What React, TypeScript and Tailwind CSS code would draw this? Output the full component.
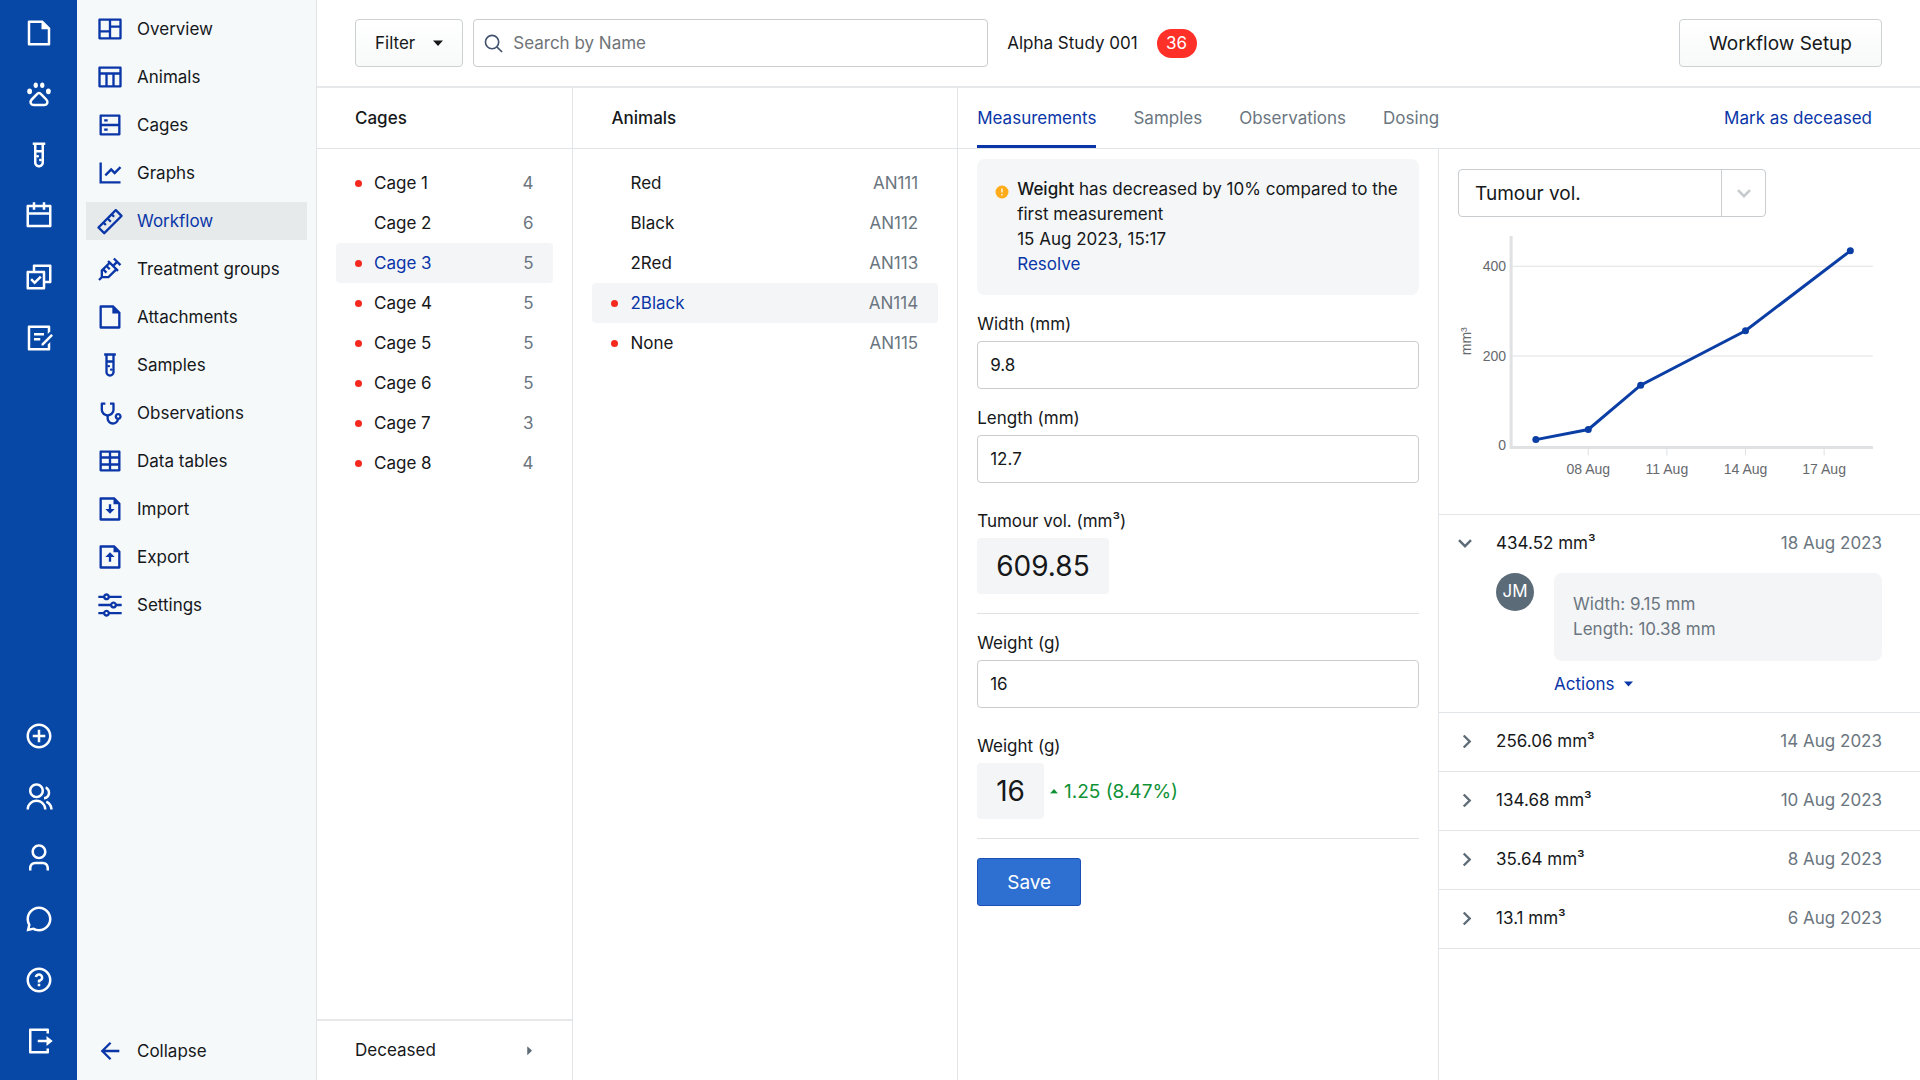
import { useState, type ReactNode } from "react"
import {
    RiAddCircleLine,
    RiArrowLeftLine,
    RiCalendarLine,
    RiChat3Line,
    RiCheckboxMultipleLine,
    RiDraftLine,
    RiEqualizerLine,
    RiFileDownloadLine,
    RiFileUploadLine,
    RiGroupLine,
    RiLayoutMasonryLine,
    RiLineChartLine,
    RiLogoutBoxRLine,
    RiQuestionLine,
    RiRulerLine,
    RiServerLine,
    RiStethoscopeLine,
    RiSyringeLine,
    RiTable2,
    RiTableLine,
    RiTestTubeLine,
    RiUser3Line,
} from "react-icons/ri"
import clsx from "clsx"

interface IconProps {
    className?: string
}

interface NavItem {
    label: string
    icon: (props: IconProps) => ReactNode
}

interface Entry {
    volume: string
    date: string
    width: string
    length: string
}

const FileIcon = ({ className }: IconProps) => (
    <svg viewBox="0 0 24 24" fill="currentColor" className={className} aria-hidden="true">
        <path fillRule="evenodd" d="M4 2h11l6 6v13a1 1 0 0 1-1 1H4a1 1 0 0 1-1-1V3a1 1 0 0 1 1-1Zm1 2v16h14V9h-5V4H5Z" />
    </svg>
)

const PawIcon = ({ className }: IconProps) => (
    <svg viewBox="0 0 24 24" fill="currentColor" className={className} aria-hidden="true">
        <ellipse cx="4.500" cy="9.800" rx="1.900" ry="2.300" />
        <ellipse cx="9.400" cy="5" rx="1.700" ry="2.200" />
        <ellipse cx="14.600" cy="5" rx="1.700" ry="2.200" />
        <ellipse cx="19.500" cy="9.800" rx="1.900" ry="2.300" />
        <path
            d="M12 11.200c.8 0 1.300.5 2 1.300l3.800 3.900c1.900 1.900.8 4.300-1.400 4.300H7.600c-2.200 0-3.300-2.400-1.400-4.300L10 12.500c.7-.8 1.200-1.300 2-1.300Z"
            fill="none"
            stroke="currentColor"
            strokeWidth="2"
        />
    </svg>
)

const SearchIcon = ({ className }: IconProps) => (
    <svg viewBox="0 0 20 20" fill="none" stroke="currentColor" strokeWidth="1.7" className={className} aria-hidden="true">
        <circle cx="8.500" cy="8.500" r="7" />
        <path d="m13.500 13.500 5.500 5.500" />
    </svg>
)

const Caret = ({ className }: IconProps) => (
    <svg viewBox="0 0 10 6" fill="currentColor" className={className} aria-hidden="true">
        <path d="M0 .5h10L5 6z" />
    </svg>
)

const Chevron = ({ className }: IconProps) => (
    <svg viewBox="0 0 14 9" fill="none" stroke="currentColor" strokeWidth="2.400" className={className} aria-hidden="true">
        <path d="m1 1.200 6 6 6-6" />
    </svg>
)

const railTop: NavItem[] = [
    { label: "Studies", icon: FileIcon },
    { label: "Animals", icon: PawIcon },
    { label: "Samples", icon: RiTestTubeLine },
    { label: "Calendar", icon: RiCalendarLine },
    { label: "Tasks", icon: RiCheckboxMultipleLine },
    { label: "Notes", icon: RiDraftLine },
]

const railBottom: NavItem[] = [
    { label: "Add", icon: RiAddCircleLine },
    { label: "Team", icon: RiGroupLine },
    { label: "Account", icon: RiUser3Line },
    { label: "Chat", icon: RiChat3Line },
    { label: "Help", icon: RiQuestionLine },
    { label: "Log out", icon: RiLogoutBoxRLine },
]

const studyNav: NavItem[] = [
    { label: "Overview", icon: RiLayoutMasonryLine },
    { label: "Animals", icon: RiTableLine },
    { label: "Cages", icon: RiServerLine },
    { label: "Graphs", icon: RiLineChartLine },
    { label: "Workflow", icon: RiRulerLine },
    { label: "Treatment groups", icon: RiSyringeLine },
    { label: "Attachments", icon: FileIcon },
    { label: "Samples", icon: RiTestTubeLine },
    { label: "Observations", icon: RiStethoscopeLine },
    { label: "Data tables", icon: RiTable2 },
    { label: "Import", icon: RiFileDownloadLine },
    { label: "Export", icon: RiFileUploadLine },
    { label: "Settings", icon: RiEqualizerLine },
]

const cages = [
    { name: "Cage 1", meta: "4", alert: true },
    { name: "Cage 2", meta: "6", alert: false },
    { name: "Cage 3", meta: "5", alert: true },
    { name: "Cage 4", meta: "5", alert: true },
    { name: "Cage 5", meta: "5", alert: true },
    { name: "Cage 6", meta: "5", alert: true },
    { name: "Cage 7", meta: "3", alert: true },
    { name: "Cage 8", meta: "4", alert: true },
]

const animals = [
    { name: "Red", meta: "AN111", alert: false },
    { name: "Black", meta: "AN112", alert: false },
    { name: "2Red", meta: "AN113", alert: false },
    { name: "2Black", meta: "AN114", alert: true },
    { name: "None", meta: "AN115", alert: true },
]

const tabs = ["Measurements", "Samples", "Observations", "Dosing"]

const entries: Entry[] = [
    { volume: "434.52", date: "18 Aug 2023", width: "9.15", length: "10.38" },
    { volume: "256.06", date: "14 Aug 2023", width: "7.9", length: "8.21" },
    { volume: "134.68", date: "10 Aug 2023", width: "6.2", length: "7.01" },
    { volume: "35.64", date: "8 Aug 2023", width: "3.8", length: "4.94" },
    { volume: "13.1", date: "6 Aug 2023", width: "2.7", length: "3.59" },
]

function Rail() {
    const renderItem = ({ label, icon: Icon }: NavItem) => (
        <a key={label} href="#" aria-label={label} className="flex h-[61px] items-center justify-center text-white">
            <Icon className="size-[30px]" />
        </a>
    )
    return (
        <nav aria-label="Main" className="flex w-[77px] shrink-0 flex-col justify-between bg-[#0747a6] pt-0.5 pb-[9px]">
            <div>{railTop.map(renderItem)}</div>
            <div>{railBottom.map(renderItem)}</div>
        </nav>
    )
}

function StudyNav() {
    return (
        <nav
            aria-label="Study"
            className="flex w-[240px] shrink-0 flex-col justify-between border-r border-[#e2e5e8] bg-[#f5f9fa] px-[9px] py-2.5"
        >
            <div className="flex flex-col gap-2.5">
                {studyNav.map(({ label, icon: Icon }) => (
                    <a
                        key={label}
                        href="#"
                        className={clsx(
                            "flex h-[38px] items-center gap-[13px] pl-2.5",
                            label === "Workflow" && "bg-[#e7eaeb] text-[#0a36a8]"
                        )}
                    >
                        <Icon className="size-7 text-[#0a36a8]" />
                        {label}
                    </a>
                ))}
            </div>
            <button type="button" className="flex h-[38px] items-center gap-[13px] pl-2.5">
                <RiArrowLeftLine className="size-7 text-[#0a36a8]" />
                Collapse
            </button>
        </nav>
    )
}

function TopBar() {
    return (
        <header className="flex h-[88px] items-center border-b-2 border-[#e6e8ea] px-[38px]">
            <button
                type="button"
                className="flex h-12 items-center gap-[18px] rounded border border-[#cdd1d4] bg-linear-to-b from-white to-[#f8f9f9] px-[19px]"
            >
                Filter
                <Caret className="w-2.5" />
            </button>
            <div className="ml-2.5 flex h-12 max-w-[515px] flex-1 items-center gap-2.5 rounded border border-[#c9cdd0] pl-2.5">
                <SearchIcon className="size-[19px] text-[#42526e]" />
                <input
                    type="search"
                    aria-label="Search by Name"
                    placeholder="Search by Name"
                    className="min-w-0 flex-1 outline-none placeholder:text-[#6f7478]"
                />
            </div>
            <span className="ml-[19px]">Alpha Study 001</span>
            <span className="ml-[19px] flex h-[29px] w-10 items-center justify-center rounded-full bg-[#ff3028] text-white">36</span>
            <button
                type="button"
                className="ml-auto h-12 rounded border border-[#cdd1d4] bg-linear-to-b from-white to-[#f8f9f9] px-[29px] text-[19px]"
            >
                Workflow Setup
            </button>
        </header>
    )
}

interface PickListProps {
    items: { name: string; meta: string; alert: boolean }[]
    selected: string
    onSelect: (name: string) => void
}

function PickList({ items, selected, onSelect }: PickListProps) {
    return (
        <ul className="flex-1 px-[19px] pt-3.5">
            {items.map((item) => (
                <li key={item.name}>
                    <button
                        type="button"
                        onClick={() => onSelect(item.name)}
                        aria-pressed={item.name === selected}
                        className={clsx(
                            "flex h-10 w-full items-center gap-3 rounded pr-5 pl-[19px]",
                            item.name === selected && "bg-[#f4f5f7] text-[#0a36a8]"
                        )}
                    >
                        <span className={clsx("size-[7px] rounded-full", item.alert && "bg-[#f5291f]")} />
                        {item.name}
                        <span className="ml-auto text-[#6b7680]">{item.meta}</span>
                    </button>
                </li>
            ))}
        </ul>
    )
}

interface FieldProps {
    id: string
    label: string
    initial: string
}

function Field({ id, label, initial }: FieldProps) {
    const [value, setValue] = useState(initial)
    return (
        <div className="mt-[17px]">
            <label htmlFor={id} className="block">
                {label}
            </label>
            <input
                id={id}
                value={value}
                onChange={(e) => setValue(e.target.value)}
                className="mt-1 block h-12 w-full rounded border border-[#c9cdd0] px-3"
            />
        </div>
    )
}

function MeasurementForm() {
    return (
        <form onSubmit={(e) => e.preventDefault()} className="border-r border-[#e2e5e8] px-[19px] pt-2.5">
            <div className="flex gap-2 rounded-lg bg-[#f4f6f7] py-[18px] pr-4 pl-[18px]">
                <svg viewBox="0 0 14 14" className="mt-2 size-3.5 shrink-0" aria-hidden="true">
                    <circle cx="7" cy="7" r="6.500" fill="#ffab1a" />
                    <path d="M7 3.500v4M7 9v1.500" stroke="#fff" strokeWidth="1.300" />
                </svg>
                <div>
                    <p>
                        <span className="font-medium">Weight</span> has decreased by 10% compared to the first measurement
                    </p>
                    <p>15 Aug 2023, 15:17</p>
                    <a href="#" className="block text-[#0a36a8]">
                        Resolve
                    </a>
                </div>
            </div>

            <Field id="width" label="Width (mm)" initial="9.8" />
            <Field id="length" label="Length (mm)" initial="12.7" />
            <div className="mt-[26px] border-b border-[#dfe2e4] pb-[19px]">
                <p>Tumour vol. (mm³)</p>
                <output className="mt-1 inline-flex h-14 items-center rounded bg-[#f4f5f7] px-[19px] text-[28px]">609.85</output>
            </div>

            <Field id="weight" label="Weight (g)" initial="16" />
            <div className="mt-[26px] border-b border-[#dfe2e4] pb-[19px]">
                <p>Weight (g)</p>
                <div className="mt-1 flex items-center gap-1.5">
                    <output className="flex h-14 items-center rounded bg-[#f4f5f7] px-[19px] text-[28px]">16</output>
                    <span className="flex items-center gap-1.5 text-[19px] text-[#0f9236]">
                        <Caret className="w-2 rotate-180" />
                        1.25 (8.47%)
                    </span>
                </div>
            </div>
            <button
                type="submit"
                className="mt-[19px] h-12 rounded-[3px] border border-[#1c50b4] bg-[#2d70d1] px-[29px] text-[19px] text-white"
            >
                Save
            </button>
        </form>
    )
}

const chartPoints = [
    { day: 6, vol: 13.1 },
    { day: 8, vol: 35.64 },
    { day: 10, vol: 134.68 },
    { day: 14, vol: 256.06 },
    { day: 18, vol: 434.52 },
]

const dayX = (day: number) => 130 + (day - 8) * 26.15
const volY = (vol: number) => 228 - vol * 0.447

function VolumeChart() {
    return (
        <svg
            viewBox="0 0 423 282"
            className="w-full font-['Liberation_Sans',sans-serif] text-[14px]"
            role="img"
            aria-label="Tumour volume over time"
        >
            <g stroke="#dfe1e3" strokeWidth="1">
                {[200, 400].map((v) => (
                    <line key={v} x1="54" x2="414" y1={volY(v)} y2={volY(v)} />
                ))}
                {[8, 11, 14, 17].map((d) => (
                    <line key={d} x1={dayX(d)} x2={dayX(d)} y1="231" y2="238" />
                ))}
            </g>
            <path d="M53 19v211h361" fill="none" stroke="#dfe1e3" strokeWidth="3" />
            <g fill="#66696d">
                {[0, 200, 400].map((v) => (
                    <text key={v} x="48" y={volY(v) + 5} textAnchor="end">
                        {v}
                    </text>
                ))}
                {[8, 11, 14, 17].map((d) => (
                    <text key={d} x={dayX(d)} y="256" textAnchor="middle">
                        {`${String(d).padStart(2, "0")} Aug`}
                    </text>
                ))}
                <text transform="translate(13 124) rotate(-90)" textAnchor="middle">
                    mm³
                </text>
            </g>
            <polyline
                points={chartPoints.map((p) => `${dayX(p.day)},${volY(p.vol)}`).join(" ")}
                fill="none"
                stroke="#0b3ea5"
                strokeWidth="3"
            />
            {chartPoints.map((p) => (
                <circle key={p.day} cx={dayX(p.day)} cy={volY(p.vol)} r="3.500" fill="#0b3ea5" />
            ))}
        </svg>
    )
}

function History() {
    const [open, setOpen] = useState("434.52")
    return (
        <ul className="border-t border-[#e2e5e8]">
            {entries.map((entry) => {
                const isOpen = entry.volume === open
                return (
                    <li key={entry.volume} className="border-b border-[#e2e5e8] pr-[38px] pl-[19px]">
                        <button
                            type="button"
                            aria-expanded={isOpen}
                            onClick={() => setOpen(isOpen ? "" : entry.volume)}
                            className="flex h-[58px] w-full items-center"
                        >
                            <span className="flex w-[38px] shrink-0">
                                <Chevron className={clsx("w-3.5 text-[#5e6c78]", isOpen ? "" : "ml-0.5 -rotate-90")} />
                            </span>
                            {entry.volume} mm³
                            <span className="ml-auto text-[#6b7680]">{entry.date}</span>
                        </button>
                        {isOpen && (
                            <div className="flex items-start gap-5 pb-[15px] pl-[38px]">
                                <span className="flex size-[38px] items-center justify-center rounded-full bg-[#5c6b78] text-white">
                                    JM
                                </span>
                                <div className="flex-1">
                                    <div className="rounded-lg bg-[#f4f5f7] px-[19px] py-[19px] text-[#6b7680]">
                                        <p>Width: {entry.width} mm</p>
                                        <p>Length: {entry.length} mm</p>
                                    </div>
                                    <button type="button" className="mt-[11px] flex items-center gap-2.5 text-[#0a36a8]">
                                        Actions
                                        <Caret className="w-[9px]" />
                                    </button>
                                </div>
                            </div>
                        )}
                    </li>
                )
            })}
        </ul>
    )
}

export default function App() {
    const [cage, setCage] = useState("Cage 3")
    const [animal, setAnimal] = useState("2Black")
    const [tab, setTab] = useState("Measurements")

    return (
        <div className="flex min-h-screen bg-white font-[Inter,sans-serif] text-[17px] leading-[25px] text-[#16181a]">
            <Rail />
            <StudyNav />
            <div className="flex min-w-0 flex-1 flex-col">
                <TopBar />
                <main className="grid flex-1 grid-cols-[4fr_6fr_15fr]">
                    <section className="flex flex-col border-r border-[#e2e5e8]">
                        <h2 className="flex h-[61px] items-center border-b border-[#e2e5e8] px-[38px] font-medium">Cages</h2>
                        <PickList items={cages} selected={cage} onSelect={setCage} />
                        <button
                            type="button"
                            className="flex h-[61px] items-center justify-between border-t-2 border-[#e6e8ea] px-[38px]"
                        >
                            Deceased
                            <Caret className="w-[9px] -rotate-90 text-[#5e6c78]" />
                        </button>
                    </section>

                    <section className="flex flex-col border-r border-[#e2e5e8]">
                        <h2 className="flex h-[61px] items-center border-b border-[#e2e5e8] px-[38px] font-medium">Animals</h2>
                        <PickList items={animals} selected={animal} onSelect={setAnimal} />
                    </section>

                    <section className="flex flex-col">
                        <div className="flex h-[61px] items-center border-b border-[#e2e5e8] pr-12 pl-[19px]">
                            <div role="tablist" className="flex gap-[37px] self-stretch">
                                {tabs.map((name) => (
                                    <button
                                        key={name}
                                        type="button"
                                        role="tab"
                                        aria-selected={name === tab}
                                        onClick={() => setTab(name)}
                                        className={clsx(
                                            "border-y-3 border-t-transparent",
                                            name === tab ? "border-b-[#0a36a8] text-[#0a36a8]" : "border-b-transparent text-[#6b7680]"
                                        )}
                                    >
                                        {name}
                                    </button>
                                ))}
                            </div>
                            <a href="#" className="ml-auto text-[#0a36a8]">
                                Mark as deceased
                            </a>
                        </div>
                        <div className="grid flex-1 grid-cols-2">
                            <MeasurementForm />
                            <div>
                                <div className="pt-5 pr-[38px] pl-[19px]">
                                    <div className="relative w-[308px]">
                                        <select
                                            aria-label="Chart variable"
                                            className="h-12 w-full appearance-none rounded border border-[#c9cdd0] px-4 text-[19px]"
                                        >
                                            <option>Tumour vol.</option>
                                            <option>Weight</option>
                                        </select>
                                        <span className="pointer-events-none absolute inset-y-px right-px flex w-11 items-center justify-center border-l border-[#c9cdd0]">
                                            <Chevron className="w-3.5 text-[#c5c9cc]" />
                                        </span>
                                    </div>
                                    <VolumeChart />
                                </div>
                                <div className="mt-3.5">
                                    <History />
                                </div>
                            </div>
                        </div>
                    </section>
                </main>
            </div>
        </div>
    )
}
